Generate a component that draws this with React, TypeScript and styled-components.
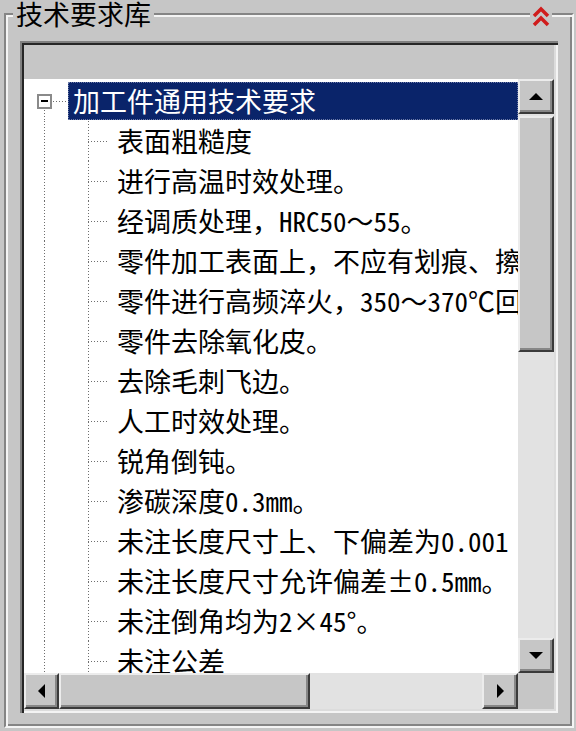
import styled, { createGlobalStyle } from 'styled-components';

const GlobalStyle = createGlobalStyle`
  html, body {
    margin: 0;
    padding: 0;
    background: #c6c6c6;
  }
  body {
    width: 576px;
    height: 731px;
    overflow: hidden;
    font-family: "Noto Sans Mono CJK SC", "Noto Sans CJK SC", sans-serif;
  }
`;

const Page = styled.div`
  padding: 0 2px 0 4px;
`;

const GroupBox = styled.fieldset`
  position: relative;
  margin: 0;
  width: 570px;
  box-sizing: border-box;
  padding: 14px 14px 13px 14px;
  border: 2px solid;
  border-color: #858585 #f4f4f4 #f4f4f4 #858585;
  box-shadow: inset 2px 2px 0 #f4f4f4, inset -2px -2px 0 #858585;
`;

const Legend = styled.legend`
  margin-left: -7px;
  padding: 0 3px;
  font-size: 27px;
  line-height: 27px;
  color: #000;
  background: #c6c6c6;
`;

const CollapseIcon = styled.svg`
  position: absolute;
  top: -22px;
  right: 20px;
  background: #c6c6c6;
`;

const Panel = styled.div`
  display: grid;
  grid-template-columns: 494px 36px;
  grid-template-rows: 34px 594px 36px;
  width: 538px;
  box-sizing: border-box;
  padding: 4px;
  background: #c6c6c6;
  box-shadow: inset 2px 2px 0 #808080, inset 4px 4px 0 #262626,
    inset -2px -2px 0 #f4f4f4, inset -4px -4px 0 #dcdcdc;
`;

const HeaderBar = styled.div`
  grid-column: 1 / -1;
  background: #c6c6c6;
`;

const TreeView = styled.div`
  overflow: hidden;
  background: #fff;
  padding-top: 2px;
`;

const Row = styled.div`
  display: flex;
  height: 40px;
  white-space: nowrap;
`;

const dots = (dir: string) =>
  `repeating-linear-gradient(${dir}, #6e6e6e 0 1px, transparent 1px 3px)`;

const Guide = styled.span<{ $line: 'full' | 'lower'; $branch?: boolean; $stub?: number }>`
  position: relative;
  flex: 0 0 44px;
  display: flex;
  align-items: center;

  &::before {
    content: '';
    position: absolute;
    left: 20px;
    width: 1px;
    top: ${(p) => (p.$line === 'lower' ? '50%' : '0')};
    bottom: 0;
    background: ${dots('to bottom')};
  }

  &::after {
    content: '';
    display: ${(p) => (p.$branch ? 'block' : 'none')};
    position: absolute;
    left: 20px;
    right: ${(p) => p.$stub ?? 0}px;
    top: 50%;
    height: 1px;
    background: ${dots('to right')};
  }
`;

const Expander = styled.span`
  position: relative;
  z-index: 1;
  margin-left: 13px;
  width: 15px;
  height: 15px;
  box-sizing: border-box;
  border: 2px solid #8a8a8a;
  background: #fff;
  display: flex;
  align-items: center;
  justify-content: center;

  &::before {
    content: '';
    width: 7px;
    height: 2px;
    background: #000;
  }
`;

const Label = styled.span<{ $selected?: boolean }>`
  margin: 1px 0;
  padding: 0 4px;
  box-sizing: border-box;
  font-size: 27px;
  line-height: 36px;
  color: ${(p) => (p.$selected ? '#fff' : '#000')};
  background: ${(p) => (p.$selected ? '#0a246a' : 'transparent')};
  border: 1px dotted ${(p) => (p.$selected ? '#6c7aa6' : 'transparent')};
  flex: ${(p) => (p.$selected ? '1' : '0 0 auto')};
`;

const Track = styled.div<{ $vertical?: boolean }>`
  display: flex;
  flex-direction: ${(p) => (p.$vertical ? 'column' : 'row')};
  background: #e2e2e2;
  overflow: hidden;
`;

const raised = `
  box-sizing: border-box;
  background: #c6c6c6;
  border: 2px solid;
  border-color: #ececec #3a3a3a #3a3a3a #ececec;
  box-shadow: inset -2px -2px 0 #878787;
`;

const ScrollButton = styled.div<{ $w: number; $h: number }>`
  ${raised}
  flex: 0 0 auto;
  width: ${(p) => p.$w}px;
  height: ${(p) => p.$h}px;
  display: flex;
  align-items: center;
  justify-content: center;
`;

const Thumb = styled.div<{ $w: number; $h: number; $offset?: number }>`
  ${raised}
  flex: 0 0 auto;
  width: ${(p) => p.$w}px;
  height: ${(p) => p.$h}px;
  margin-top: ${(p) => p.$offset ?? 0}px;
`;

const Spacer = styled.div`
  flex: 1;
`;

const Corner = styled.div`
  background: #c6c6c6;
`;

const Arrow = ({ dir }: { dir: 'up' | 'down' | 'left' | 'right' }) => {
  const pts = {
    up: '0,7 7,0 14,7',
    down: '0,0 14,0 7,7',
    left: '7,0 7,14 0,7',
    right: '0,0 7,7 0,14',
  }[dir];
  const vertical = dir === 'up' || dir === 'down';
  return (
    <svg width={vertical ? 14 : 7} height={vertical ? 7 : 14} viewBox={vertical ? '0 0 14 7' : '0 0 7 14'}>
      <polygon points={pts} fill="#000" />
    </svg>
  );
};

const items = [
  '表面粗糙度',
  '进行高温时效处理。',
  '经调质处理，HRC50～55。',
  '零件加工表面上，不应有划痕、擦伤等损伤零件表面的缺陷。',
  '零件进行高频淬火，350～370℃回火，HRC40～45。',
  '零件去除氧化皮。',
  '去除毛刺飞边。',
  '人工时效处理。',
  '锐角倒钝。',
  '渗碳深度0.3mm。',
  '未注长度尺寸上、下偏差为0.001 mm。',
  '未注长度尺寸允许偏差±0.5mm。',
  '未注倒角均为2×45°。',
  '未注公差',
];

export default function App() {
  return (
    <>
      <GlobalStyle />
      <Page>
        <GroupBox>
          <Legend>技术要求库</Legend>
          <CollapseIcon width="22" height="24" viewBox="-1 -1 22 24">
            <polyline points="3,10 10,3 17,10" fill="none" stroke="#d01c1c" strokeWidth="3.5" />
            <polyline points="3,19 10,12 17,19" fill="none" stroke="#d01c1c" strokeWidth="3.5" />
          </CollapseIcon>
          <Panel>
            <HeaderBar />
            <TreeView>
              <Row>
                <Guide $line="lower" $branch>
                  <Expander />
                </Guide>
                <Label $selected>加工件通用技术要求</Label>
              </Row>
              {items.map((text) => (
                <Row key={text}>
                  <Guide $line="full" />
                  <Guide $line="full" $branch $stub={4} />
                  <Label>{text}</Label>
                </Row>
              ))}
            </TreeView>
            <Track $vertical>
              <ScrollButton $w={36} $h={35}>
                <Arrow dir="up" />
              </ScrollButton>
              <Thumb $w={36} $h={236} $offset={2} />
              <Spacer />
              <ScrollButton $w={36} $h={35}>
                <Arrow dir="down" />
              </ScrollButton>
            </Track>
            <Track>
              <ScrollButton $w={35} $h={36}>
                <Arrow dir="left" />
              </ScrollButton>
              <Thumb $w={251} $h={36} />
              <Spacer />
              <ScrollButton $w={36} $h={36}>
                <Arrow dir="right" />
              </ScrollButton>
            </Track>
            <Corner />
          </Panel>
        </GroupBox>
      </Page>
    </>
  );
}
